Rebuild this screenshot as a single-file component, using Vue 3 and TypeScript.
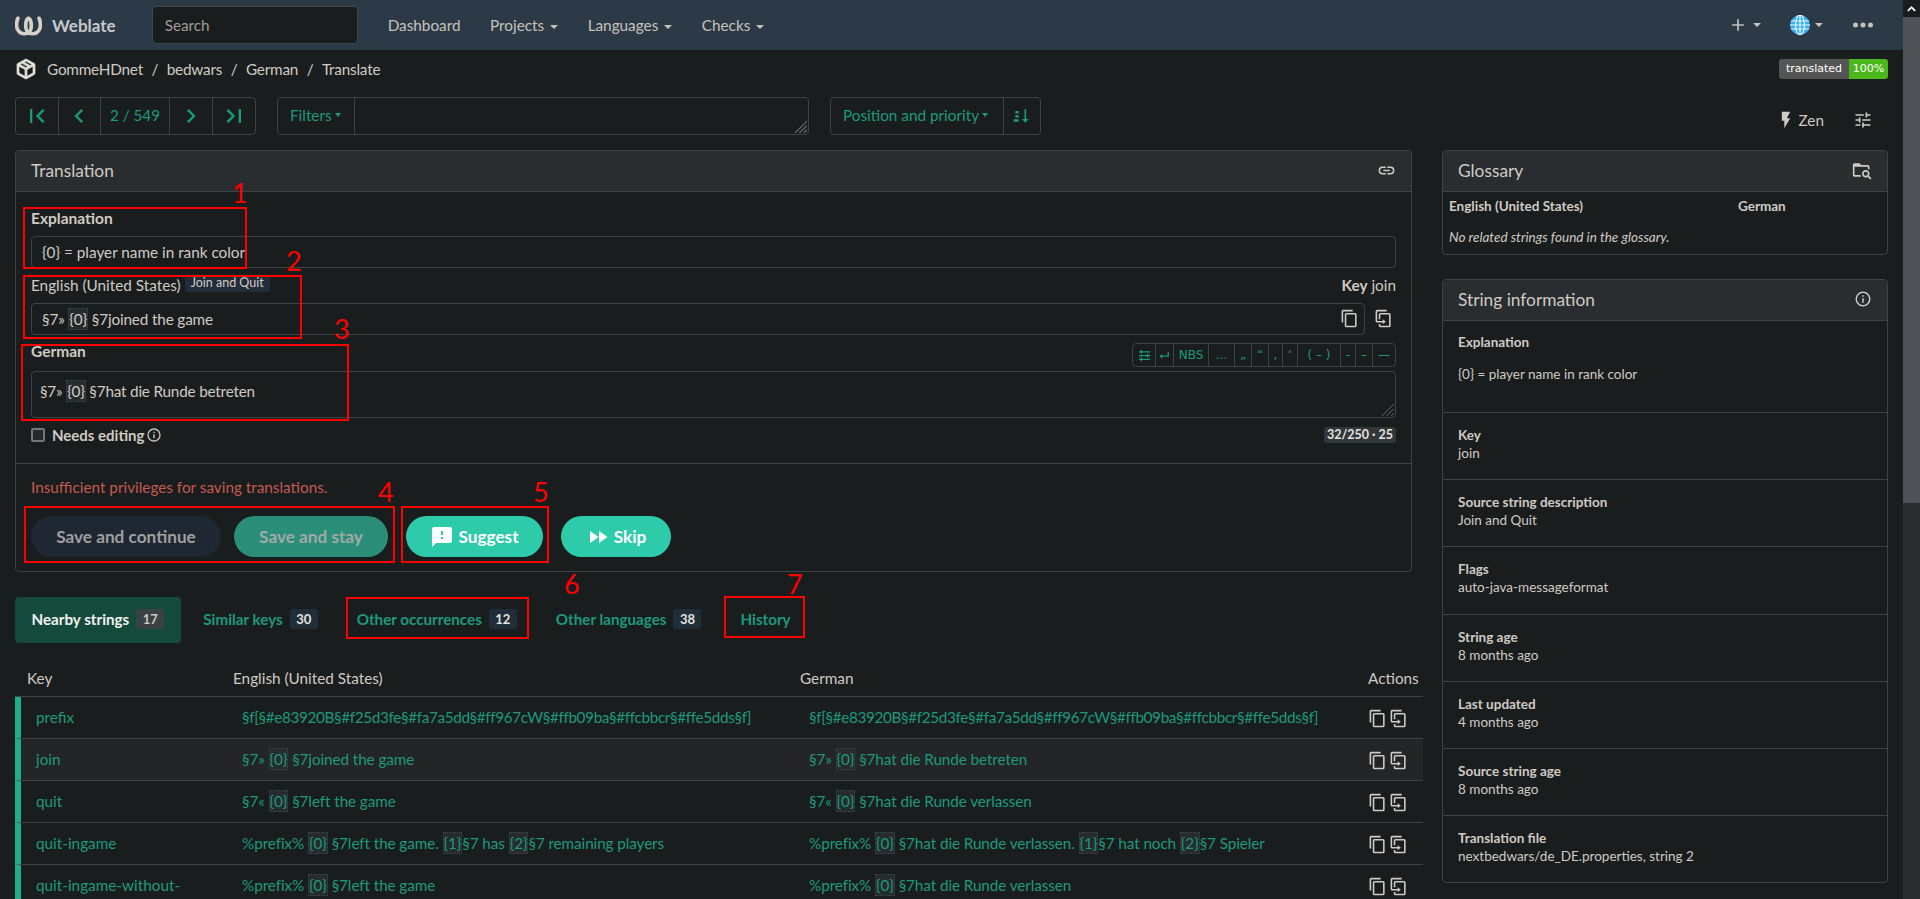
<script setup lang="ts">
const icons = {
  first: 'M18.41,16.59L13.82,12L18.41,7.41L17,6L11,12L17,18L18.41,16.59M6,6H8V18H6V6Z',
  prev: 'M15.41,16.58L10.83,12L15.41,7.41L14,6L8,12L14,18L15.41,16.58Z',
  next: 'M8.59,16.58L13.17,12L8.59,7.41L10,6L16,12L10,18L8.59,16.58Z',
  last: 'M5.59,7.41L10.18,12L5.59,16.59L7,18L13,12L7,6L5.59,7.41M16,6H18V18H16V6Z',
  copy: 'M19,21H8V7H19M19,5H8A2,2 0 0,0 6,7V21A2,2 0 0,0 8,23H19A2,2 0 0,0 21,21V7A2,2 0 0,0 19,5M16,1H4A2,2 0 0,0 2,3V17H4V3H16V1Z',
  clone: 'M11,17H4A2,2 0 0,1 2,15V3A2,2 0 0,1 4,1H16V3H4V15H11V13L15,16L11,19V17M19,21V7H8V13H6V7A2,2 0 0,1 8,5H19A2,2 0 0,1 21,7V21A2,2 0 0,1 19,23H8A2,2 0 0,1 6,21V19H8V21H19Z',
  info: 'M11,9H13V7H11M12,20C7.59,20 4,16.41 4,12C4,7.59 7.59,4 12,4C16.41,4 20,7.59 20,12C20,16.41 16.41,20 12,20M12,2A10,10 0 0,0 2,12A10,10 0 0,0 12,22A10,10 0 0,0 22,12A10,10 0 0,0 12,2M11,17H13V11H11V17Z',
  link: 'M3.9,12C3.9,10.29 5.29,8.9 7,8.9H11V7H7A5,5 0 0,0 2,12A5,5 0 0,0 7,17H11V15.1H7C5.29,15.1 3.9,13.71 3.9,12M8,13H16V11H8V13M17,7H13V8.9H17C18.71,8.9 20.1,10.29 20.1,12C20.1,13.71 18.71,15.1 17,15.1H13V17H17A5,5 0 0,0 22,12A5,5 0 0,0 17,7Z',
  folder: 'M16.5,12C19,12 21,14 21,16.5C21,17.38 20.75,18.21 20.31,18.9L23.39,22L22,23.39L18.88,20.32C18.19,20.75 17.37,21 16.5,21C14,21 12,19 12,16.5C12,14 14,12 16.5,12M16.5,14A2.5,2.5 0 0,0 14,16.5A2.5,2.5 0 0,0 16.5,19A2.5,2.5 0 0,0 19,16.5A2.5,2.5 0 0,0 16.5,14M19,8H3V18H10.17C10.34,18.72 10.63,19.39 11,20H3C1.89,20 1,19.1 1,18V6C1,4.89 1.89,4 3,4H9L11,6H19A2,2 0 0,1 21,8V11.81C20.42,11.26 19.75,10.81 19,10.5V8Z',
  box: 'M21,16.5C21,16.88 20.79,17.21 20.47,17.38L12.57,21.82C12.41,21.94 12.21,22 12,22C11.79,22 11.59,21.94 11.43,21.82L3.53,17.38C3.21,17.21 3,16.88 3,16.5V7.5C3,7.12 3.21,6.79 3.53,6.62L11.43,2.18C11.59,2.06 11.79,2 12,2C12.21,2 12.41,2.06 12.57,2.18L20.47,6.62C20.79,6.79 21,7.12 21,7.5V16.5M12,4.15L10.11,5.22L16,8.61L17.96,7.5L12,4.15M6.04,7.5L12,10.85L13.96,9.75L8.08,6.35L6.04,7.5M5,15.91L11,19.29V12.58L5,9.21V15.91M19,15.91V9.21L13,12.58V19.29L19,15.91Z',
  plus: 'M19,13H13V19H11V13H5V11H11V5H13V11H19V13Z',
  dots: 'M16,12A2,2 0 0,1 18,10A2,2 0 0,1 20,12A2,2 0 0,1 18,14A2,2 0 0,1 16,12M10,12A2,2 0 0,1 12,10A2,2 0 0,1 14,12A2,2 0 0,1 12,14A2,2 0 0,1 10,12M4,12A2,2 0 0,1 6,10A2,2 0 0,1 8,12A2,2 0 0,1 6,14A2,2 0 0,1 4,12Z',
  bolt: 'M7,2V13H10V22L17,10H13L17,2H7Z',
  tune: 'M3,17V19H9V17H3M3,5V7H13V5H3M13,21V19H21V17H13V15H11V21H13M7,9V11H3V13H7V15H9V9H7M21,13V11H11V13H21M15,9H17V7H21V5H17V3H15V9Z',
  suggest: 'M20,2H4C2.9,2 2,2.9 2,4V22L6,18H20C21.1,18 22,17.1 22,16V4C22,2.9 21.1,2 20,2M13,14H11V12H13V14M13,10H11V6H13V10Z',
  skip: 'M13,6V18L21.5,12M4,18L12.5,12L4,6V18Z',
  enter: 'M17,6V12H8.5V9L4,13L8.5,17V14H19V6H17Z',
  tab: 'M3,5H21V7H3V5M6,3H8V9H6V3M3,11H21V13H3V11M16,9H18V15H16V9M3,17H21V19H3V17M6,15H8V21H6V15Z',
  sort: 'M4,6H8V9H4V6M4,11H8V14H4V11M2,16H8V19H2V16M15,4H17V15.5H20L16,20L12,15.5H15V4Z'
}

const pager = [icons.first, icons.prev, '', icons.next, icons.last]

const navLinks = [
  { label: 'Dashboard', caret: false },
  { label: 'Projects', caret: true },
  { label: 'Languages', caret: true },
  { label: 'Checks', caret: true }
]

const crumbs = ['GommeHDnet', 'bedwars', 'German', 'Translate']

const chars = [
  { w: 23, icon: icons.tab },
  { w: 18, icon: icons.enter },
  { w: 35, text: 'NBS' },
  { w: 26, text: '…' },
  { w: 17, text: '„' },
  { w: 17, text: '“' },
  { w: 14, text: '‚' },
  { w: 15, text: '‘' },
  { w: 43, text: '( – )' },
  { w: 15, text: '-' },
  { w: 17, text: '–' },
  { w: 22, text: '—' }
]

const tabs = [
  { label: 'Nearby strings', count: 17, active: true },
  { label: 'Similar keys', count: 30 },
  { label: 'Other occurrences', count: 12 },
  { label: 'Other languages', count: 38 },
  { label: 'History' }
]

const prefixLine = '§f[§#e83920B§#f25d3fe§#fa7a5dd§#ff967cW§#ffb09ba§#ffcbbcr§#ffe5dds§f]'

const rows = [
  { key: 'prefix', source: prefixLine, target: prefixLine, hex: true },
  { key: 'join', source: '§7» {0} §7joined the game', target: '§7» {0} §7hat die Runde betreten', current: true },
  { key: 'quit', source: '§7« {0} §7left the game', target: '§7« {0} §7hat die Runde verlassen' },
  {
    key: 'quit-ingame',
    source: '%prefix% {0} §7left the game. {1}§7 has {2}§7 remaining players',
    target: '%prefix% {0} §7hat die Runde verlassen. {1}§7 hat noch {2}§7 Spieler'
  },
  { key: 'quit-ingame-without-', source: '%prefix% {0} §7left the game', target: '%prefix% {0} §7hat die Runde verlassen' }
]

const infoRows = [
  { label: 'Key', value: 'join' },
  { label: 'Source string description', value: 'Join and Quit' },
  { label: 'Flags', value: 'auto-java-messageformat' },
  { label: 'String age', value: '8 months ago' },
  { label: 'Last updated', value: '4 months ago' },
  { label: 'Source string age', value: '8 months ago' },
  { label: 'Translation file', value: 'nextbedwars/de_DE.properties, string 2' }
]

// red markers drawn on top of the screenshot
const marks = [
  { n: 1, box: [23, 207, 224, 62], at: [232, 177] },
  { n: 2, box: [23, 275, 279, 64], at: [286, 245] },
  { n: 3, box: [21, 344, 328, 77], at: [334, 313] },
  { n: 4, box: [24, 506, 371, 57], at: [378, 476] },
  { n: 5, box: [401, 506, 148, 57], at: [533, 476] },
  { n: 6, box: [346, 597, 183, 42], at: [564, 568] },
  { n: 7, box: [724, 596, 81, 42], at: [787, 568] }
]

function boxStyle(b: number[]) {
  return { left: `${b[0]}px`, top: `${b[1]}px`, width: `${b[2]}px`, height: `${b[3]}px` }
}

function numStyle(p: number[]) {
  return { left: `${p[0]}px`, top: `${p[1]}px` }
}

function parts(text: string) {
  return text.split(/(\{\d\})/).filter(Boolean).map((t) => ({ t, hl: /^\{\d\}$/.test(t) }))
}
</script>

<template>
  <div class="page">
    <div class="main">
      <nav class="navbar">
        <svg class="logo" viewBox="0 0 28 20" fill="none" stroke="#d6d0c6" stroke-width="3.8" stroke-linecap="round">
          <path d="M3 2C-.5 11 3 18 10 18C13 18 15.5 17 16.5 13C17.5 7 16 2 14 2C12 2 10.500 7 11.500 13C12.500 17 15 18 18 18C25 18 28.500 11 25 2" />
        </svg>
        <span class="brand">Weblate</span>
        <div class="search">Search</div>
        <ul class="nav-links">
          <li v-for="link in navLinks" :key="link.label">
            {{ link.label }}<span v-if="link.caret" class="caret"></span>
          </li>
        </ul>
        <div class="nav-right">
          <svg class="ic plus" viewBox="0 0 24 24"><path :d="icons.plus" /></svg>
          <span class="caret gap-a"></span>
          <svg class="globe" viewBox="0 0 20 20">
            <circle cx="10" cy="10" r="10" fill="#35aef0" />
            <g fill="none" stroke="#e8f6ff" stroke-width="1.2">
              <ellipse cx="10" cy="10" rx="4.500" ry="10" />
              <path d="M10 0V20M1 6H19M0 10H20M1 14H19" />
            </g>
          </svg>
          <span class="caret gap-b"></span>
          <svg class="ic dots" viewBox="0 0 24 24"><path :d="icons.dots" /></svg>
        </div>
      </nav>

      <div class="crumbs">
        <svg class="ic crumb-icon" viewBox="0 0 24 24"><path :d="icons.box" /></svg>
        <template v-for="(crumb, i) in crumbs" :key="crumb">
          <span v-if="i > 0" class="sep">/</span>
          <span>{{ crumb }}</span>
        </template>
        <div class="status">
          <span class="status-l">translated</span><span class="status-r">100%</span>
        </div>
      </div>

      <div class="toolbar">
        <div class="group pager">
          <template v-for="(d, i) in pager" :key="i">
            <span v-if="d" class="pg"><svg class="ic green" viewBox="0 0 24 24"><path :d="d" /></svg></span>
            <span v-else class="pg pg-count">2 / 549</span>
          </template>
        </div>
        <div class="group filters">
          <span class="filter-btn">Filters<span class="caret green-caret"></span></span>
          <div class="filter-input">
            <svg class="grip" viewBox="0 0 12 12"><path d="M12 1L1 12M12 5L5 12M12 9L9 12" stroke="#6a6e70" fill="none" /></svg>
          </div>
        </div>
        <div class="group sorter">
          <span class="sort-btn">Position and priority<span class="caret green-caret"></span></span>
          <span class="sort-icon"><svg class="ic green" viewBox="0 0 24 24"><path :d="icons.sort" /></svg></span>
        </div>
        <div class="tool-right">
          <svg class="ic bolt" viewBox="0 0 24 24"><path :d="icons.bolt" /></svg>
          <span class="zen">Zen</span>
          <svg class="ic tune" viewBox="0 0 24 24"><path :d="icons.tune" /></svg>
        </div>
      </div>

      <div class="columns">
        <div class="col-left">
          <section class="panel">
            <header class="panel-head">
              <span>Translation</span>
              <svg class="ic head-icon" viewBox="0 0 24 24"><path :d="icons.link" /></svg>
            </header>
            <div class="edit">
              <div class="field-label strong">Explanation</div>
              <div class="box">{0} = player name in rank color</div>

              <div class="label-row">
                <span class="field-label">English (United States)<span class="ctx">Join and Quit</span></span>
                <span class="key-name"><b>Key</b> join</span>
              </div>
              <div class="source-row">
                <div class="box grow">
                  <span v-for="(p, i) in parts('§7» {0} §7joined the game')" :key="i" :class="{ hl: p.hl }">{{ p.t }}</span>
                  <svg class="ic copy-in" viewBox="0 0 24 24"><path :d="icons.copy" /></svg>
                </div>
                <svg class="ic clone-out" viewBox="0 0 24 24"><path :d="icons.clone" /></svg>
              </div>

              <div class="german-row">
                <span class="field-label strong">German</span>
                <div class="chars">
                  <span
                    v-for="(c, i) in chars"
                    :key="i"
                    class="char"
                    :style="{ width: `${c.w}px` }"
                  >
                    <svg v-if="c.icon" class="ic green char-icon" viewBox="0 0 24 24"><path :d="c.icon" /></svg>
                    <template v-else>{{ c.text }}</template>
                  </span>
                </div>
              </div>
              <div class="editor">
                <span v-for="(p, i) in parts('§7» {0} §7hat die Runde betreten')" :key="i" :class="{ hl: p.hl }">{{ p.t }}</span>
                <svg class="grip" viewBox="0 0 14 14"><path d="M14 1L1 14M14 6L6 14M14 11L11 14" stroke="#6a6e70" fill="none" /></svg>
              </div>
              <div class="needs-row">
                <span class="check"></span>
                <span class="needs">Needs editing</span>
                <svg class="ic small-info" viewBox="0 0 24 24"><path :d="icons.info" /></svg>
                <span class="counter">32/250 · 25</span>
              </div>
            </div>
            <div class="submit">
              <div class="warning">Insufficient privileges for saving translations.</div>
              <div class="buttons">
                <span class="btn save-continue">Save and continue</span>
                <span class="btn save-stay">Save and stay</span>
                <span class="btn suggest"><svg class="ic white" viewBox="0 0 24 24"><path :d="icons.suggest" /></svg>Suggest</span>
                <span class="btn skip"><svg class="ic white" viewBox="0 0 24 24"><path :d="icons.skip" /></svg>Skip</span>
              </div>
            </div>
          </section>

          <div class="tabs">
            <span v-for="tab in tabs" :key="tab.label" class="tab" :class="{ active: tab.active }">
              {{ tab.label }}<span v-if="tab.count" class="count">{{ tab.count }}</span>
            </span>
          </div>

          <table class="strings">
            <thead>
              <tr>
                <th class="c-key">Key</th>
                <th class="c-src">English (United States)</th>
                <th class="c-tgt">German</th>
                <th class="c-act">Actions</th>
              </tr>
            </thead>
            <tbody>
              <tr v-for="row in rows" :key="row.key" :class="{ current: row.current, hex: row.hex }">
                <td class="td-key">{{ row.key }}</td>
                <td class="td-text"><span v-for="(p, i) in parts(row.source)" :key="i" :class="{ hl: p.hl }">{{ p.t }}</span></td>
                <td class="td-text"><span v-for="(p, i) in parts(row.target)" :key="i" :class="{ hl: p.hl }">{{ p.t }}</span></td>
                <td class="td-act">
                  <svg class="ic" viewBox="0 0 24 24"><path :d="icons.copy" /></svg>
                  <svg class="ic" viewBox="0 0 24 24"><path :d="icons.clone" /></svg>
                </td>
              </tr>
            </tbody>
          </table>
        </div>

        <aside class="col-right">
          <section class="panel">
            <header class="panel-head side-head">
              <span>Glossary</span>
              <svg class="ic head-icon" viewBox="0 0 24 24"><path :d="icons.folder" /></svg>
            </header>
            <div class="glossary">
              <div class="gloss-head"><b>English (United States)</b><b>German</b></div>
              <div class="gloss-empty">No related strings found in the glossary.</div>
            </div>
          </section>

          <section class="panel info-panel">
            <header class="panel-head side-head">
              <span>String information</span>
              <svg class="ic head-icon info-icon" viewBox="0 0 24 24"><path :d="icons.info" /></svg>
            </header>
            <div class="info-row first">
              <b>Explanation</b>
              <p>{0} = player name in rank color</p>
            </div>
            <div v-for="info in infoRows" :key="info.label" class="info-row">
              <b>{{ info.label }}</b>
              <div>{{ info.value }}</div>
            </div>
          </section>
        </aside>
      </div>
    </div>

    <div class="scrollbar">
      <div class="sb-up"><svg viewBox="0 0 10 8"><path d="M1 6L5 2L9 6" fill="none" stroke="#fff" stroke-width="2" /></svg></div>
      <div class="sb-thumb"></div>
    </div>

    <template v-for="m in marks" :key="m.n">
      <div class="mark-box" :style="boxStyle(m.box)"></div>
      <span class="mark-num" :style="numStyle(m.at)">{{ m.n }}</span>
    </template>
  </div>
</template>

<style>
html,
body {
  margin: 0;
  background: #1a1d1e;
  overflow: hidden;
}
</style>

<style scoped>
.page {
  position: relative;
  display: flex;
  height: 899px;
  overflow: hidden;
  background: #1a1d1e;
  color: #cfcbc4;
  font-family: Lato, "Open Sans", sans-serif;
  font-size: 15.3px;
}

.main {
  flex: 1;
  min-width: 0;
}

.ic {
  display: block;
  width: 24px;
  height: 24px;
  fill: currentColor;
  flex: none;
}

.green {
  color: #1c9a7c;
}

.white {
  color: #fff;
}

.caret {
  display: inline-block;
  margin-left: 6px;
  vertical-align: 2px;
  border-top: 4px solid currentColor;
  border-left: 4px solid transparent;
  border-right: 4px solid transparent;
}

.navbar {
  display: flex;
  align-items: center;
  height: 50px;
  padding-left: 15px;
  background: #2c3a48;
  color: #c6c2ba;
}

.logo {
  width: 27px;
  height: 20px;
  margin-top: 2px;
  flex: none;
}

.brand {
  margin-left: 10px;
  font-weight: 700;
  font-size: 17px;
  color: #c6c9cc;
}

.search {
  box-sizing: border-box;
  width: 206px;
  height: 38px;
  margin-left: 36px;
  padding: 0 12px;
  line-height: 36px;
  background: #1a1d1e;
  border: 1px solid #40464b;
  border-radius: 4px;
  color: #a09c95;
}

.nav-links {
  display: flex;
  gap: 29.5px;
  margin: 0 0 0 30px;
  padding: 0;
  list-style: none;
}

.nav-right {
  display: flex;
  align-items: center;
  margin-left: auto;
  padding-right: 30px;
}

.plus {
  width: 20px;
  height: 20px;
}

.gap-a {
  margin: 0 29px 0 5px;
}

.globe {
  width: 20px;
  height: 20px;
}

.gap-b {
  margin: 0 30px 0 5px;
}

.dots {
  width: 30px;
  height: 30px;
  margin: 0 -5px;
}

.crumbs {
  display: flex;
  align-items: center;
  height: 38px;
  padding: 0 15px;
  margin-bottom: 9px;
  letter-spacing: -0.2px;
}

.crumb-icon {
  margin: 0 9px 0 -1px;
  color: #e2dfd9;
  stroke: currentColor;
  stroke-width: 0.7;
}

.sep {
  margin: 0 8.5px;
}

.status {
  display: flex;
  margin-left: auto;
  height: 20px;
  line-height: 20px;
  border-radius: 3px;
  overflow: hidden;
  color: #fff;
  font-family: "DejaVu Sans", sans-serif;
  font-size: 11px;
  letter-spacing: 0;
}

.status-l {
  width: 70px;
  text-align: center;
  background: #555;
}

.status-r {
  width: 39px;
  text-align: center;
  background: #4ab81c;
}

.toolbar {
  display: flex;
  align-items: flex-start;
  height: 37px;
  padding: 0 15px;
  margin-bottom: 16px;
  color: #1c9a7c;
}

.group {
  display: flex;
  box-sizing: border-box;
  height: 38px;
  border: 1px solid #3f4345;
  border-radius: 4px;
}

.pg {
  display: flex;
  align-items: center;
  justify-content: center;
  box-sizing: border-box;
  width: 42.5px;
  border-right: 1px solid #3f4345;
}

.pg .ic {
  width: 28px;
  height: 28px;
}

.pg:last-child {
  border-right: 0;
}

.pg-count {
  width: 69px;
  padding-bottom: 2px;
}

.filters {
  width: 532px;
  margin-left: 21px;
}

.filter-btn {
  display: flex;
  align-items: center;
  box-sizing: border-box;
  width: 77px;
  padding: 0 0 2px 12px;
  border-right: 1px solid #3f4345;
}

.green-caret {
  margin-left: 3px;
  border-top-width: 4px;
  border-left-width: 3px;
  border-right-width: 3px;
}

.filter-input {
  position: relative;
  flex: 1;
}

.grip {
  position: absolute;
  right: 1px;
  bottom: 1px;
  width: 13px;
  height: 13px;
}

.sorter {
  width: 211px;
  margin-left: 21px;
}

.sort-btn {
  display: flex;
  align-items: center;
  width: 173px;
  padding: 0 0 2px 12px;
  box-sizing: border-box;
  border-right: 1px solid #3f4345;
}

.sort-icon {
  display: flex;
  align-items: center;
  justify-content: center;
  flex: 1;
}

.sort-icon .ic {
  width: 20px;
  height: 20px;
}

.tool-right {
  display: flex;
  align-items: center;
  margin-left: auto;
  margin-top: 13px;
  color: #cfcbc4;
}

.bolt {
  width: 20px;
  height: 20px;
  margin-right: 3px;
}

.zen {
  margin-right: 29px;
}

.tune {
  width: 20px;
  height: 20px;
  margin-right: 15px;
}

.columns {
  display: flex;
  gap: 30px;
  padding: 0 15px;
}

.col-left {
  width: 1397px;
  flex: none;
}

.col-right {
  flex: 1;
}

.panel {
  box-sizing: border-box;
  border: 1px solid #3f4345;
  border-radius: 4px;
}

.panel-head {
  display: flex;
  align-items: center;
  justify-content: space-between;
  box-sizing: border-box;
  height: 41px;
  padding: 0 15px 2px;
  background: #292d2f;
  border-bottom: 1px solid #3f4345;
  font-size: 17.3px;
  border-radius: 4px 4px 0 0;
}

.head-icon {
  width: 19px;
  height: 19px;
}

.side-head .head-icon {
  width: 20px;
  height: 20px;
}

.side-head .info-icon {
  width: 18px;
  height: 18px;
}

.edit {
  padding: 17px 15px 20px;
  border-bottom: 1px solid #3f4345;
}

.field-label {
  line-height: 20px;
}

.strong {
  font-weight: 700;
  font-size: 15.5px;
  line-height: 18px;
  padding-bottom: 2px;
}

.box {
  position: relative;
  box-sizing: border-box;
  display: flex;
  align-items: center;
  height: 32px;
  margin-top: 7px;
  padding: 0 10px 1px;
  border: 1px solid #3f4345;
  border-radius: 4px;
  white-space: pre;
}

.label-row {
  display: flex;
  justify-content: space-between;
  margin-top: 7px;
  line-height: 20px;
}

.source-row .box {
  margin-top: 8px;
  letter-spacing: -0.15px;
}

.ctx {
  display: inline-block;
  vertical-align: top;
  height: 16px;
  line-height: 14px;
  margin-left: 4px;
  margin-top: 1px;
  padding: 0 6px;
  background: #222d3a;
  border-radius: 0 0 3px 3px;
  font-size: 12.5px;
}

.key-name b {
  font-weight: 700;
}

.source-row {
  display: flex;
  align-items: center;
}

.grow {
  flex: 1;
}

.copy-in {
  position: absolute;
  right: 5px;
  top: 5px;
  width: 19px;
  height: 19px;
}

.clone-out {
  width: 19px;
  height: 19px;
  margin: 6px 3px 0 9px;
}

.hl {
  display: inline-block;
  padding: 2px 1px;
  line-height: 18px;
  background: #272b2d;
  outline: 1px dotted #3c4650;
  outline-offset: -1px;
}

.german-row {
  display: flex;
  justify-content: space-between;
  margin-top: 8px;
  height: 24px;
}

.german-row .field-label {
  margin-top: -1px;
}

.chars {
  display: flex;
  height: 24px;
  border: 1px solid #3f4345;
  border-radius: 4px;
  box-sizing: border-box;
  font-family: "DejaVu Sans", sans-serif;
  font-size: 12px;
  color: #1c9a7c;
}

.char {
  display: flex;
  align-items: center;
  justify-content: center;
  box-sizing: border-box;
  border-right: 1px solid #3f4345;
  white-space: pre;
}

.char:last-child {
  border-right: 0;
}

.char-icon {
  width: 15px;
  height: 15px;
}

.editor {
  position: relative;
  box-sizing: border-box;
  height: 47px;
  margin-top: 4px;
  padding: 8px 8px;
  border: 1px solid #3f4345;
  border-radius: 4px;
  white-space: pre;
  letter-spacing: -0.2px;
}

.needs-row {
  display: flex;
  align-items: center;
  height: 16px;
  margin-top: 9px;
}

.check {
  box-sizing: border-box;
  width: 14px;
  height: 14px;
  margin-right: 7px;
  background: #26292b;
  border: 2px solid #73777a;
  border-radius: 2px;
}

.needs {
  font-weight: 700;
  font-size: 15px;
  margin-right: 2px;
}

.small-info {
  width: 16px;
  height: 16px;
}

.counter {
  margin-left: auto;
  height: 16px;
  line-height: 16px;
  padding: 0 3px;
  background: #32373b;
  border-radius: 3px;
  font-size: 12.5px;
  font-weight: 700;
  color: #e5e3df;
}

.submit {
  padding: 13px 15px 14px;
}

.warning {
  line-height: 20px;
  color: #c45a52;
}

.buttons {
  display: flex;
  margin-top: 19px;
}

.btn {
  display: flex;
  align-items: center;
  justify-content: center;
  box-sizing: border-box;
  height: 41px;
  border-radius: 21px;
  font-weight: 700;
  font-size: 17.2px;
}

.btn .ic {
  margin-right: 4px;
}

.save-continue {
  width: 190px;
  background: #1f2733;
  color: #9fa09f;
}

.save-stay {
  width: 154px;
  margin-left: 13px;
  background: #2b8e78;
  color: #a2aba7;
}

.suggest {
  width: 137px;
  margin-left: 18px;
  background: #2ecbab;
  color: #fff;
}

.skip {
  width: 110px;
  margin-left: 18px;
  background: #2ecbab;
  color: #fff;
}

.tabs {
  display: flex;
  gap: 6px;
  margin-top: 25px;
  color: #1c9a7c;
  font-weight: 700;
  font-size: 15.2px;
}

.tab {
  display: flex;
  align-items: center;
  box-sizing: border-box;
  height: 46px;
  padding: 0 16.5px 2px;
  border-radius: 4px;
  white-space: nowrap;
}

.tab.active {
  background: #144a3c;
  color: #f2f2f0;
}

.count {
  display: inline-block;
  min-width: 28px;
  height: 20px;
  margin-left: 7px;
  line-height: 20px;
  text-align: center;
  background: #222d3a;
  border-radius: 3px;
  font-size: 13px;
  color: #e5e3df;
}

.active .count {
  background: #3b4042;
  color: #c8c8c4;
}

.strings {
  width: 1408px;
  margin-top: 18px;
  border-spacing: 0;
  table-layout: fixed;
}

.strings th {
  height: 36px;
  padding: 0 0 2px 12px;
  box-sizing: border-box;
  text-align: left;
  font-weight: 400;
  border-bottom: 1px solid #3f4345;
}

.c-key {
  width: 206px;
}

.c-src {
  width: 567px;
}

.c-tgt {
  width: 568px;
}

.strings td {
  height: 42px;
  box-sizing: border-box;
  padding: 0 0 2px 21px;
  color: #1c9a7c;
  white-space: nowrap;
  border-bottom: 1px solid #3f4345;
}

.strings .current td {
  background: #232527;
}

.strings .td-key {
  padding-left: 15px;
  border-left: 6px solid #1fae8c;
}

.td-text {
  overflow: hidden;
  letter-spacing: -0.1px;
}

.hex .td-text {
  letter-spacing: -0.36px;
}

.strings .td-act {
  padding: 0 0 0 12px;
  color: #cfcbc4;
}

.td-act .ic {
  display: inline-block;
  width: 19px;
  height: 19px;
  margin-right: 2px;
  vertical-align: middle;
}

.glossary {
  padding: 4px 6px 7px;
  font-size: 13.5px;
  line-height: 20px;
}

.gloss-head {
  display: flex;
}

.gloss-head b:first-child {
  width: 289px;
}

.gloss-empty {
  margin-top: 11px;
  font-style: italic;
}

.info-panel {
  margin-top: 24px;
}

.info-row {
  padding: 13px 15px 17.2px;
  border-bottom: 1px solid #3f4345;
  font-size: 13.5px;
  line-height: 18px;
}

.info-row:last-child {
  border-bottom: 0;
}

.info-row b {
  display: block;
  font-weight: 700;
}

.info-row p {
  margin: 14px 0 0;
}

.info-row.first {
  padding: 12px 15px 29px;
}

.scrollbar {
  width: 17px;
  flex: none;
  background: #2a2d2f;
}

.sb-up {
  display: flex;
  align-items: center;
  justify-content: center;
  height: 17px;
  background: #1a1d1e;
}

.sb-up svg {
  width: 9px;
  height: 8px;
}

.sb-thumb {
  height: 486px;
  background: #4f5358;
}

.mark-box {
  position: absolute;
  box-sizing: border-box;
  border: 2px solid #f00;
}

.mark-num {
  position: absolute;
  font-size: 27px;
  line-height: 32px;
  color: #f00;
}
</style>
